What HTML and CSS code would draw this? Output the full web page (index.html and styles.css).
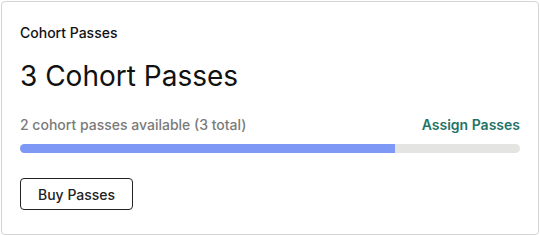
FILE: index.html
```html
<!DOCTYPE html>
<html>
<head>
  <meta charset="utf-8">
  <title>Cohort Passes</title>
  <link rel="stylesheet" href="styles.css">
</head>
<body>
<div class="card">
  <div class="card-label">Cohort Passes</div>
  <h1 class="card-title">3 Cohort Passes</h1>
  <div class="pass-row">
    <span class="pass-info">2 cohort passes available (3 total)</span>
    <a href="#" class="assign-link">Assign Passes</a>
  </div>
  <div class="progress">
    <div class="progress-fill" style="width: 75%;"></div>
  </div>
  <button type="button" class="buy-btn">Buy Passes</button>
</div>
</body>
</html>
```

FILE: styles.css
```css
body { margin: 0; padding: 1px; font-family: Inter, "Liberation Sans", sans-serif; background: #fff; color: #111; }

.card { box-sizing: border-box; width: 538px; height: 234px; border: 1px solid #d4d4d4; border-radius: 4px; padding: 22px 18px; }
.card-label { font-size: 14px; font-weight: 500; line-height: 18px; }
.card-title { font-size: 28px; font-weight: 400; line-height: 34px; margin: 17px 0 0; }

.pass-row { display: flex; justify-content: space-between; align-items: center; margin-top: 23px; font-size: 14px; line-height: 18px; }
.pass-info { color: #7a7a7a; font-weight: 500; }
.assign-link { color: #1f7468; font-weight: 600; text-decoration: none; }

.progress { height: 9px; border-radius: 5px; background: #e4e5e3; margin-top: 10px; overflow: hidden; }
.progress-fill { height: 100%; background: #7e98f5; }

.buy-btn { margin-top: 25px; padding: 0 17px; height: 32px; border: 1px solid #222; border-radius: 4px; background: #fff; font-family: inherit; font-size: 14px; font-weight: 500; color: #222; cursor: pointer; }
```
